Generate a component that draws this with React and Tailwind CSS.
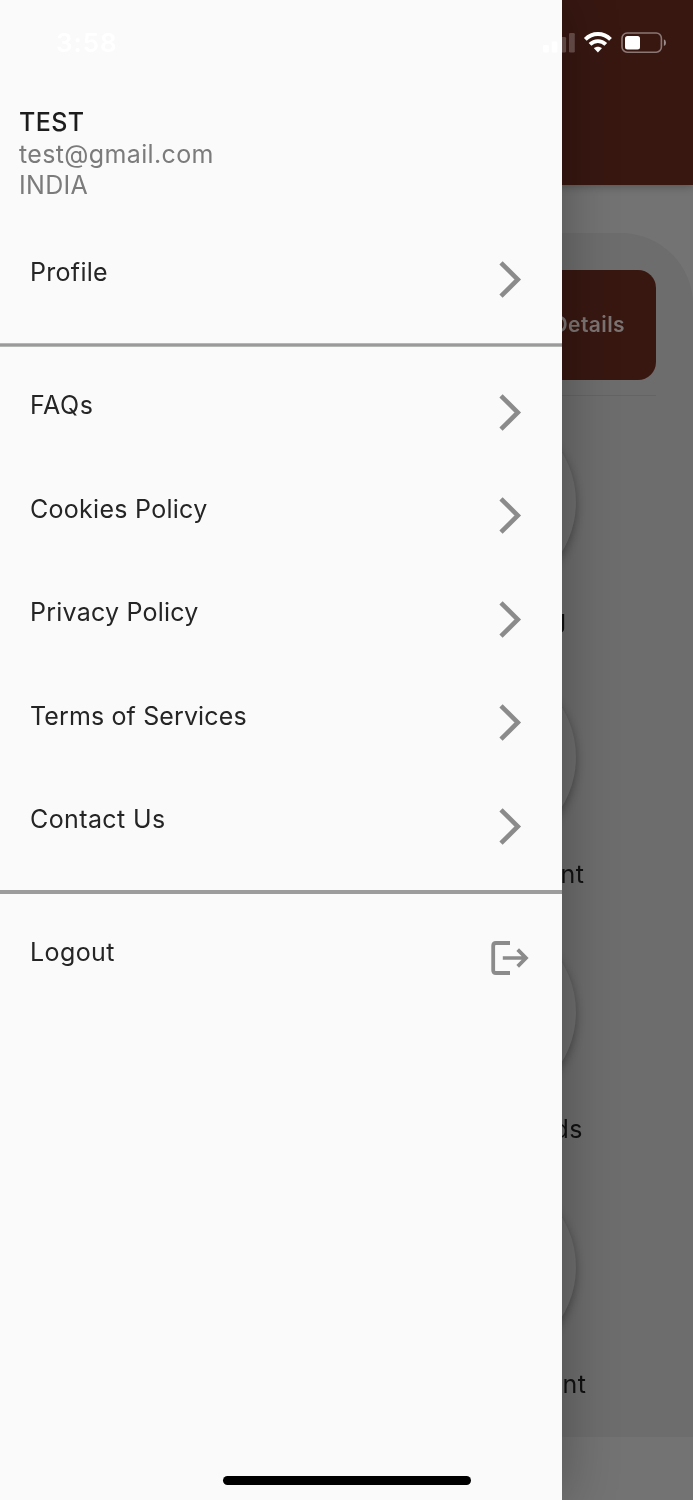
const tiles = [
  { label: "g", pad: "pr-[126.5px]" },
  { label: "nt", pad: "pr-[108.5px]" },
  { label: "ds", pad: "pr-[110px]" },
  { label: "nt", pad: "pr-[106.5px]" },
];

function Chevron() {
  return (
    <svg className="block h-[37px] w-6" viewBox="0 0 24 37" fill="none">
      <path d="M2 1.8 18.8 18.5 2 35.2" stroke="#8b8b8b" strokeWidth="4.6" />
    </svg>
  );
}

function LogoutIcon() {
  return (
    <svg className="block h-[34px] w-[38px]" viewBox="0 0 38 34" fill="none" stroke="#8b8b8b">
      <path d="M19 2H5Q2.2 2 2.2 4.8V29.2Q2.2 32 5 32H19" strokeWidth="3.8" />
      <path d="M11.8 17H34.5M26.7 8.6 35 17l-8.3 8.4" strokeWidth="3.7" />
    </svg>
  );
}

function MenuItem({ label, tracking, children }) {
  return (
    <button className="flex h-[103.5px] w-full items-start justify-between pl-[30px] text-left">
      <span className={`pt-[30.5px] text-[25px] leading-[30px] text-[#252525] ${tracking}`}>{label}</span>
      {children}
    </button>
  );
}

function Row({ label, tracking }) {
  return (
    <MenuItem label={label} tracking={tracking}>
      <span className="pt-[34px] pr-[39px]">
        <Chevron />
      </span>
    </MenuItem>
  );
}

function Dashboard() {
  return (
    <div className="flex h-full flex-col bg-[#737373]">
      <header className="relative h-[184.7px] shrink-0 bg-[#381711] shadow-[0_2px_8px_rgba(0,0,0,0.25)]" />
      <main className="mt-[48.3px] h-[1204px] shrink-0 overflow-hidden rounded-tr-[72px] bg-[#6d6d6d] pt-[37px]">
        <div className="mr-[37px] flex h-[110.5px] items-center justify-end rounded-[18px] bg-[#381711] pr-[31px]">
          <span className="text-[21px] font-semibold tracking-[0.4px] text-[#7b7472]">Details</span>
        </div>
        <div className="mt-[14.5px] mr-[37px] h-px bg-[#646464]" />
        <div className="mt-[10px] flex flex-col">
          {tiles.map((tile, i) => (
            <div key={i} className="flex h-[255px] flex-col items-end">
              <div className="mr-[117px] size-48 shrink-0 rounded-full bg-[#6e6e6e] shadow-[0_4px_10px_rgba(0,0,0,0.32)]" />
              <div className={`mt-[6px] text-[25px] leading-[30px] tracking-[0.5px] text-[#111] ${tile.pad}`}>{tile.label}</div>
            </div>
          ))}
        </div>
      </main>
    </div>
  );
}

function Drawer() {
  return (
    <nav className="absolute inset-y-0 left-0 w-[561.6px] bg-[#fafafa] pt-[107.3px] shadow-[0_0_52px_rgba(0,0,0,0.3)]">
      <div className="flex h-[103.7px] flex-col pl-[19px] text-[25px] leading-[31.6px] text-[#7b7b7b]">
        <span className="font-medium tracking-[0.4px] text-[#1c1c1c]">TEST</span>
        <span className="tracking-[0.36px]">test@gmail.com</span>
        <span className="tracking-[0.3px]">INDIA</span>
      </div>
      <div className="pt-[15.8px]">
        <Row label="Profile" tracking="tracking-[0.3px]" />
      </div>
      <div className="mt-[13.2px] h-1 border-y border-[#b5b7b5] bg-[#999a99]" />
      <div className="pt-[12.2px]">
        <Row label="FAQs" tracking="tracking-[0.6px]" />
        <Row label="Cookies Policy" tracking="tracking-[0.28px]" />
        <Row label="Privacy Policy" tracking="tracking-[0.22px]" />
        <Row label="Terms of Services" tracking="tracking-[0.13px]" />
        <Row label="Contact Us" tracking="tracking-[0.4px]" />
      </div>
      <div className="mt-[13.3px] h-1 bg-[#9c9c9c]" />
      <div className="pt-[12px]">
        <MenuItem label="Logout" tracking="tracking-[0.4px]">
          <span className="pt-[35px] pr-[33px]">
            <LogoutIcon />
          </span>
        </MenuItem>
      </div>
    </nav>
  );
}

function StatusBar() {
  return (
    <div className="absolute inset-x-0 top-0 flex h-[86px] items-center justify-between pr-[27px] pl-[56px] text-white">
      <span className="pb-0.5 text-[26px] font-semibold tracking-[0.9px]">3:58</span>
      <svg className="block h-6 w-[124px]" viewBox="542 31 124 24" fill="none">
        <rect x="543" y="45" width="5.7" height="7.6" rx="1.3" fill="#fff" />
        <rect x="551.7" y="41.5" width="5.7" height="11.1" rx="1.3" fill="#fff" />
        <rect x="560.4" y="37" width="5.7" height="15.6" rx="1.3" fill="#fff" fillOpacity="0.22" />
        <rect x="569" y="33" width="5.8" height="19.6" rx="1.3" fill="#fff" fillOpacity="0.22" />
        <g stroke="#fff" strokeWidth="3.9">
          <path d="M585.3 39.4C592.4 32.2 603.4 32.2 610.5 39.4" />
          <path d="M590 44.4C594.5 40 601.3 40 605.8 44.4" />
        </g>
        <path d="M597.9 52.4 593.9 48.3C596.1 46.3 599.7 46.3 601.9 48.3Z" fill="#fff" />
        <rect x="622" y="33" width="39.4" height="19.2" rx="5.2" stroke="#fff" strokeOpacity="0.42" strokeWidth="1.6" />
        <rect x="625" y="36" width="15" height="13.5" rx="2.5" fill="#fff" />
        <path d="M663.9 39.3Q666 40.2 666 42.7T663.9 46.1Z" fill="#fff" fillOpacity="0.5" />
      </svg>
    </div>
  );
}

export default function App() {
  return (
    <div className="relative h-[1500px] w-[693px] overflow-hidden font-['Inter',sans-serif] will-change-transform">
      <Dashboard />
      <Drawer />
      <StatusBar />
      <div className="absolute bottom-[15.3px] left-[223px] h-[9.2px] w-[247.5px] rounded-full bg-black" />
    </div>
  );
}
